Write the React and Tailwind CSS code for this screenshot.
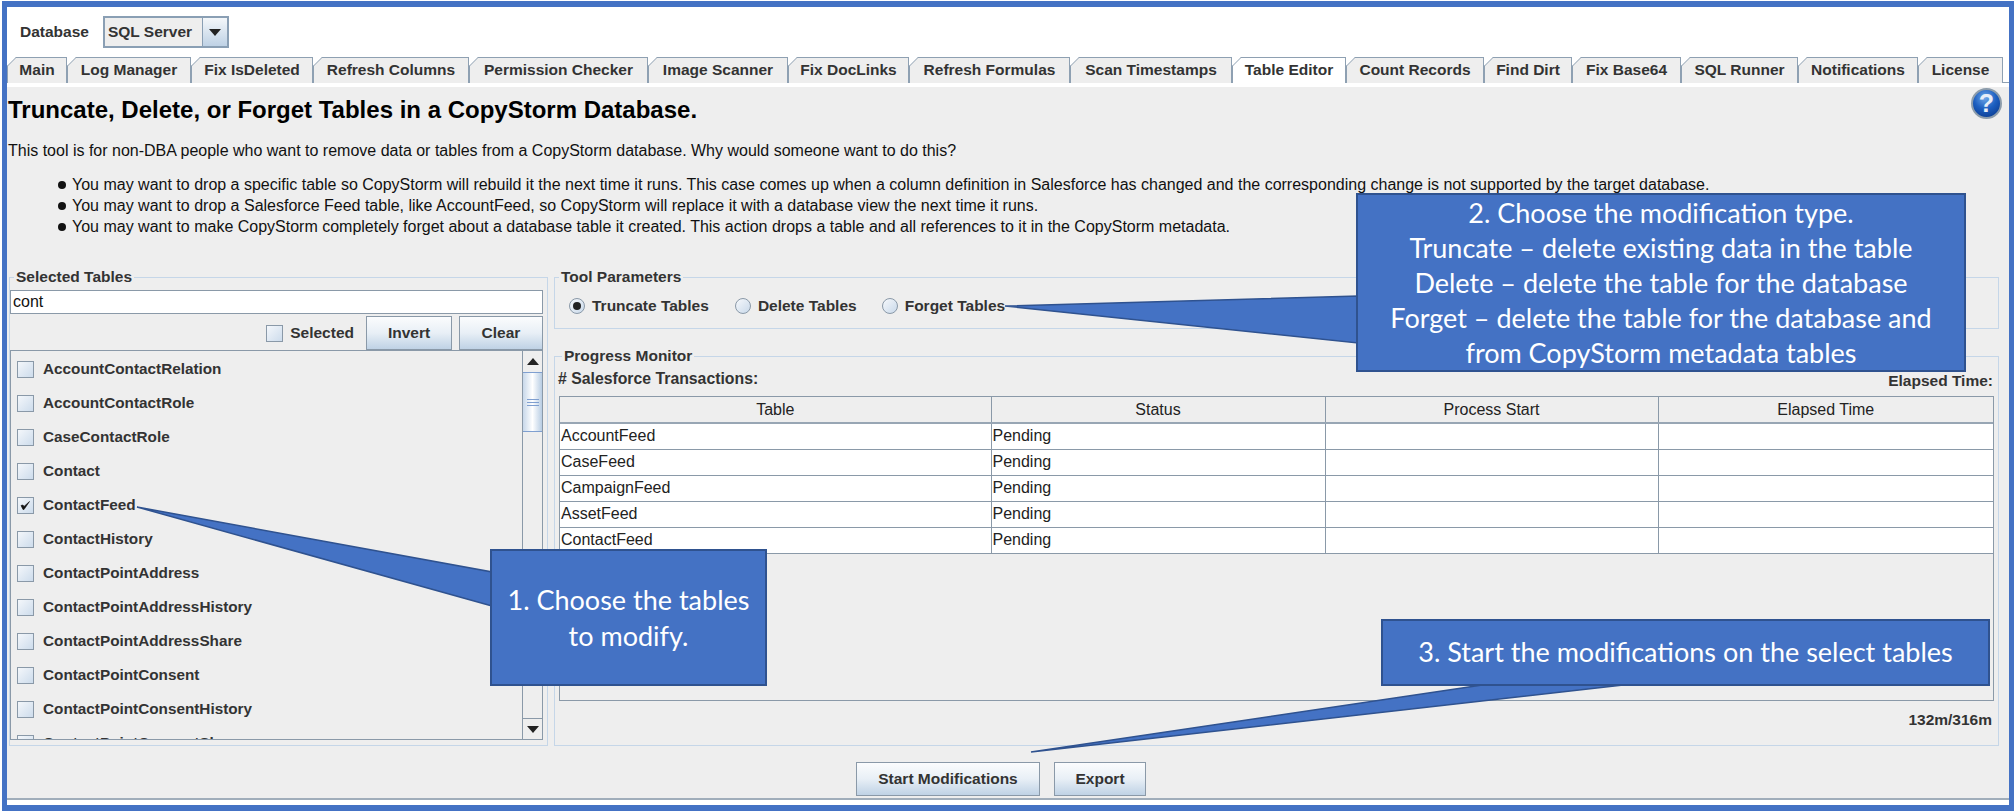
import React from 'react';

const sans = 'font-["Liberation_Sans",Arial,sans-serif]';

const tabs = [
  ['Main', 'w-[60px]'],
  ['Log Manager', 'w-[124px]'],
  ['Fix IsDeleted', 'w-[122px]'],
  ['Refresh Columns', 'w-[156px]'],
  ['Permission Checker', 'w-[179px]'],
  ['Image Scanner', 'w-[140px]'],
  ['Fix DocLinks', 'w-[121px]'],
  ['Refresh Formulas', 'w-[161px]'],
  ['Scan Timestamps', 'w-[162px]'],
  ['Table Editor', 'w-[114px]'],
  ['Count Records', 'w-[138px]'],
  ['Find Dirt', 'w-[88px]'],
  ['Fix Base64', 'w-[109px]'],
  ['SQL Runner', 'w-[117px]'],
  ['Notifications', 'w-[120px]'],
  ['License', 'w-[85px]'],
];

const bullets = [
  'You may want to drop a specific table so CopyStorm will rebuild it the next time it runs. This case comes up when a column definition in Salesforce has changed and the corresponding change is not supported by the target database.',
  'You may want to drop a Salesforce Feed table, like AccountFeed, so CopyStorm will replace it with a database view the next time it runs.',
  'You may want to make CopyStorm completely forget about a database table it created. This action drops a table and all references to it in the CopyStorm metadata.',
];

const tableNames = [
  'AccountContactRelation',
  'AccountContactRole',
  'CaseContactRole',
  'Contact',
  'ContactFeed',
  'ContactHistory',
  'ContactPointAddress',
  'ContactPointAddressHistory',
  'ContactPointAddressShare',
  'ContactPointConsent',
  'ContactPointConsentHistory',
  'ContactPointConsentShare',
];

const feeds = ['AccountFeed', 'CaseFeed', 'CampaignFeed', 'AssetFeed', 'ContactFeed'];

const Tab = ({ label, width, active }) => (
  <div
    className={`relative flex h-[26px] shrink-0 items-center justify-center border-t border-r border-l border-[#8ea0b2] pb-[1px] text-[15.5px] font-bold text-[#333] ${width} ${
      active ? 'bg-white' : 'bg-[#eeeeee]'
    }`}
  >
    {label}
    <svg className="absolute -top-px -left-px" width="9" height="9" viewBox="0 0 9 9">
      <polygon points="0,0 9,0 0,9" fill="white" />
      <line x1="9" y1="0.5" x2="0.5" y2="9" stroke="#8ea0b2" />
    </svg>
  </div>
);

const CheckBox = ({ checked }) => (
  <span className="flex h-[17px] w-[17px] shrink-0 items-center justify-center border border-[#8a99a8] bg-gradient-to-br from-[#f4f7fb] to-[#cddcec]">
    {checked && (
      <svg width="11" height="11" viewBox="0 0 11 11">
        <path d="M1 5.5 L3 5 L4 6.5 L9.5 1.5 L4 9.5 L3 9.5 Z" fill="#111" stroke="#111" strokeWidth="0.6" />
      </svg>
    )}
  </span>
);

const Radio = ({ checked, label, className }) => (
  <div className={`flex items-center gap-[7px] ${className}`}>
    <span className="flex h-[16px] w-[16px] items-center justify-center rounded-full border border-[#8a99a8] bg-gradient-to-br from-[#f6f8fb] to-[#c9d9ea]">
      {checked && <span className="h-[8px] w-[8px] rounded-full bg-[#222]" />}
    </span>
    <span className="text-[15.5px] font-bold text-[#333]">{label}</span>
  </div>
);

const MetalButton = ({ children, className }) => (
  <button className={`flex items-center justify-center border border-[#8a99a8] bg-gradient-to-b from-[#fbfcfd] via-[#e8eff6] to-[#bfd2e5] text-[15.5px] font-bold text-[#333] ${className}`}>
    {children}
  </button>
);

const Group = ({ title, className, children }) => (
  <fieldset className={`min-w-0 border border-[#c5d6e8] ${className}`}>
    <legend className="ml-[4px] h-[18px] px-[2px] text-[15.5px] leading-[18px] font-bold text-[#333]">{title}</legend>
    {children}
  </fieldset>
);

const Arrow = ({ up }) => (
  <svg width="12" height="7" viewBox="0 0 12 7">
    <polygon points={up ? '6,0 12,7 0,7' : '0,0 12,0 6,7'} fill="#222" />
  </svg>
);

const HelpIcon = () => (
  <svg className="mt-px" width="31" height="31" viewBox="0 0 31 31">
    <defs>
      <radialGradient id="helpBlue" cx="45%" cy="30%" r="70%">
        <stop offset="0%" stopColor="#6fa8e8" />
        <stop offset="55%" stopColor="#1d5fc0" />
        <stop offset="100%" stopColor="#0c3f96" />
      </radialGradient>
    </defs>
    <circle cx="15.5" cy="15.5" r="14.5" fill="url(#helpBlue)" stroke="#8c9cab" strokeWidth="2" />
    <text x="15.5" y="24" textAnchor="middle" fontSize="25" fontWeight="bold" fontFamily="Liberation Sans" fill="#e8eef7">?</text>
  </svg>
);

const Callout = ({ className, children }) => (
  <div className={`absolute flex flex-col items-center justify-center border-2 border-[#2f528f] bg-[#4472c4] text-center font-["Lato",sans-serif] text-[27px] whitespace-nowrap text-white ${className}`}>
    {children}
  </div>
);

export default function App() {
  return (
    <div className={`relative h-[812px] w-[2014px] overflow-hidden bg-white pt-px pb-px pl-[2px] ${sans}`}>
      <div className="flex h-full w-full flex-col border-x-[5px] border-y-[6px] border-[#4472c4] bg-white">
        {/* database picker */}
        <div className="flex h-[50px] shrink-0 items-center pl-[13px] text-[15.5px] font-bold text-[#333]">
          <span>Database</span>
          <div className="ml-[14px] flex h-[32px] w-[126px] border-2 border-[#8a9fb4] bg-[#eeeeee]">
            <span className="flex-1 pl-[3px] leading-[27px]">SQL Server</span>
            <span className="flex w-[25px] items-center justify-center border-l border-[#8a9fb4] bg-gradient-to-b from-[#f4f7fa] to-[#bfd2e5]">
              <Arrow />
            </span>
          </div>
        </div>

        {/* tabs */}
        <div className="flex h-[26px] shrink-0 border-b border-[#8ea0b2]">
          {tabs.map(([label, width]) => (
            <Tab key={label} label={label} width={width} active={label === 'Table Editor'} />
          ))}
        </div>
        <div className="h-[4px] shrink-0 bg-white" />

        <div className="flex min-h-0 flex-1 flex-col bg-[#eeeeee] text-[#111]">
          <div className="flex h-[44px] shrink-0 justify-between pr-[7px] pl-px">
            <h1 className="pt-[8px] text-[24px] leading-[30px] font-bold text-black">Truncate, Delete, or Forget Tables in a CopyStorm Database.</h1>
            <HelpIcon />
          </div>
          <p className="mt-[10px] pl-px text-[16px] leading-[20px]">
            This tool is for non-DBA people who want to remove data or tables from a CopyStorm database. Why would someone want to do this?
          </p>
          <ul className="mt-[13px] pl-[51px] text-[16px] leading-[21px]">
            {bullets.map((text) => (
              <li key={text} className="flex items-center gap-[6px]">
                <span className="h-[8px] w-[8px] shrink-0 rounded-full bg-[#111]" />
                {text}
              </li>
            ))}
          </ul>

          <div className="mt-[31px] ml-[2px] flex h-[478px] shrink-0 gap-[6px]">
            <Group title="Selected Tables" className="flex w-[539px] flex-col pr-[4px] pb-[5px]">
              <input
                readOnly
                value="cont"
                className="mt-[4px] h-[24px] w-full shrink-0 border border-[#8a99a8] bg-white pl-[2px] text-[16px] text-[#111] outline-none"
              />
              <div className="mt-[2px] flex h-[34px] shrink-0 items-center justify-end">
                <CheckBox />
                <span className="ml-[7px] text-[15.5px] font-bold text-[#333]">Selected</span>
                <MetalButton className="ml-[12px] h-[34px] w-[86px]">Invert</MetalButton>
                <MetalButton className="ml-[7px] h-[34px] w-[84px]">Clear</MetalButton>
              </div>
              <div className="flex min-h-0 flex-1 overflow-hidden border border-[#8a99a8]">
                <div className="min-w-0 flex-1 overflow-hidden pt-[1px] pl-[6px]">
                  {tableNames.map((name) => (
                    <div key={name} className="flex h-[34px] shrink-0 items-center gap-[9px] text-[15.3px] font-bold text-[#333]">
                      <CheckBox checked={name === 'ContactFeed'} />
                      {name}
                    </div>
                  ))}
                </div>
                <div className="flex w-[20px] shrink-0 flex-col border-l border-[#8a99a8]">
                  <div className="flex h-[21px] shrink-0 items-center justify-center">
                    <Arrow up />
                  </div>
                  <div className="flex h-[60px] shrink-0 flex-col items-center justify-center gap-[2px] border-y border-[#7f9fd0] bg-gradient-to-r from-[#c8d8ea] via-white to-[#b8cde3]">
                    <span className="h-px w-[12px] bg-[#7f9fd0]" />
                    <span className="h-px w-[12px] bg-[#7f9fd0]" />
                    <span className="h-px w-[12px] bg-[#7f9fd0]" />
                  </div>
                  <div className="flex-1" />
                  <div className="flex h-[21px] shrink-0 items-center justify-center border-t border-[#8a99a8]">
                    <Arrow />
                  </div>
                </div>
              </div>
            </Group>

            <div className="flex w-[1445px] flex-col gap-[18px]">
              <Group title="Tool Parameters" className="h-[61px] shrink-0">
                <div className="flex h-[26px] items-center pt-[14px] pl-[14px]">
                  <Radio checked label="Truncate Tables" />
                  <Radio label="Delete Tables" className="ml-[26px]" />
                  <Radio label="Forget Tables" className="ml-[25px]" />
                </div>
              </Group>
              <Group title="Progress Monitor" className="flex min-h-0 flex-1 flex-col pl-[3px]">
                <div className="flex h-[22px] shrink-0 items-center justify-between pt-[6px] pr-[5px] text-[15.5px] font-bold text-[#333]">
                  <span className="text-[15.8px]">
                    # Salesforce Transactions:
                  </span>
                  <span className="pt-[3px]">Elapsed Time:</span>
                </div>
                <div className="mt-[9px] ml-px h-[305px] w-[1435px] shrink-0 border border-[#8a99a8]">
                  <table className="w-full table-fixed border-collapse text-[16px] text-[#222]">
                    <colgroup>
                      <col className="w-[431px]" />
                      <col className="w-[334px]" />
                      <col className="w-[333px]" />
                      <col />
                    </colgroup>
                    <thead>
                      <tr className="h-[26px] border-b-2 border-[#98a6b4] bg-[#eeeeee]">
                        {['Table', 'Status', 'Process Start', 'Elapsed Time'].map((h) => (
                          <th key={h} className="border-l border-[#8a99a8] font-normal first:border-l-0">{h}</th>
                        ))}
                      </tr>
                    </thead>
                    <tbody>
                      {feeds.map((feed) => (
                        <tr key={feed} className="h-[26px] border-b border-[#8a99a8] bg-white">
                          <td className="pl-[1px]">{feed}</td>
                          <td className="border-l border-[#8a99a8] pl-[1px]">Pending</td>
                          <td className="border-l border-[#8a99a8]" />
                          <td className="border-l border-[#8a99a8]" />
                        </tr>
                      ))}
                    </tbody>
                  </table>
                </div>
                <div className="mt-[7px] pr-[6px] text-right text-[15.5px] font-bold text-[#333]">132m/316m</div>
              </Group>
            </div>
          </div>

          <div className="flex flex-1 items-start justify-center gap-[14px] pt-[16px] pr-[14px]">
            <MetalButton className="h-[34px] w-[184px]">Start Modifications</MetalButton>
            <MetalButton className="h-[34px] w-[92px]">Export</MetalButton>
          </div>
        </div>
        <div className="h-[7px] shrink-0 border-t-2 border-[#a0adba] bg-white" />
      </div>

      {/* callout tails */}
      <svg className="pointer-events-none absolute top-0 left-0" width="2014" height="812" viewBox="0 0 2014 812">
        <g fill="#4472c4" stroke="#2f528f" strokeWidth="1.5">
          <polygon points="1005,306 1358,296 1358,343" />
          <polygon points="137,507 492,572 492,606" />
          <polygon points="1031,752 1489,684 1632,684" />
        </g>
      </svg>

      <Callout className="top-[193px] left-[1356px] h-[179px] w-[610px] pb-[1px] leading-[35px]">
        <span>2. Choose the modification type.</span>
        <span>Truncate – delete existing data in the table</span>
        <span>Delete – delete the table for the database</span>
        <span>Forget – delete the table for the database and</span>
        <span>from CopyStorm metadata tables</span>
      </Callout>
      <Callout className="top-[549px] left-[490px] h-[137px] w-[277px] leading-[36px]">
        <span>1. Choose the tables</span>
        <span>to modify.</span>
      </Callout>
      <Callout className="top-[619px] left-[1381px] h-[67px] w-[609px]">
        <span>3. Start the modifications on the select tables</span>
      </Callout>
    </div>
  );
}
